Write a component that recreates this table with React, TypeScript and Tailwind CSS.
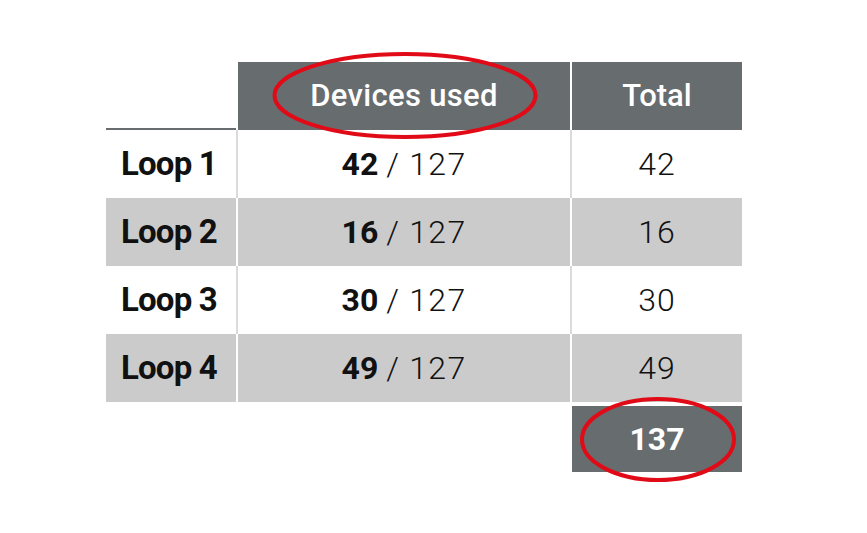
const rows = [
  { label: "Loop 1", used: 42, total: 42, shaded: false },
  { label: "Loop 2", used: 16, total: 16, shaded: true },
  { label: "Loop 3", used: 30, total: 30, shaded: false },
  { label: "Loop 4", used: 49, total: 49, shaded: true },
];

export default function App() {
  return (
    <div className="w-[867px] h-[533px] bg-white pl-[106px] pt-[62px] font-['Roboto',sans-serif] text-[#111]">
      <div className="relative w-[636px]">
        {/* header */}
        <div className="flex h-[68px]">
          <div className="w-[130px] border-b-2 border-[#676c6f]" />
          <div className="w-[2px]" />
          <div className="w-[332px] bg-[#676c6f] flex items-center justify-center text-white text-[31px] font-medium tracking-[0.01em]">
            Devices used
          </div>
          <div className="w-[2px] bg-white" />
          <div className="w-[170px] bg-[#676c6f] flex items-center justify-center text-white text-[31px] font-medium">
            Total
          </div>
        </div>

        {rows.map((r) => (
          <div key={r.label} className="flex h-[68px]">
            <div
              className={`w-[130px] flex items-center pl-[15px] text-[33px] font-bold tracking-[-0.025em] ${
                r.shaded ? "bg-[#cbcbcb]" : "bg-white"
              }`}
            >
              {r.label}
            </div>
            <div className={`w-[2px] ${r.shaded ? "bg-white" : "bg-[#d8dcde]"}`} />
            <div
              className={`w-[332px] flex items-center justify-center text-[32px] ${
                r.shaded ? "bg-[#cbcbcb]" : "bg-white"
              }`}
            >
              <span className="font-bold">{r.used}</span>
              <span className="font-light ml-[8px] tracking-[0.04em]">/ 127</span>
            </div>
            <div className={`w-[2px] ${r.shaded ? "bg-white" : "bg-[#d8dcde]"}`} />
            <div
              className={`w-[170px] flex items-center justify-center text-[32px] font-light tracking-[0.03em] ${
                r.shaded ? "bg-[#cbcbcb]" : "bg-white"
              }`}
            >
              {r.total}
            </div>
          </div>
        ))}

        {/* grand total */}
        <div className="flex mt-[4px]">
          <div className="ml-[466px] w-[170px] h-[66px] bg-[#676c6f] flex items-center justify-center text-white text-[32px] font-bold">
            137
          </div>
        </div>

        {/* red highlight rings */}
        <svg
          className="absolute left-0 top-0 pointer-events-none overflow-visible"
          width="636"
          height="420"
        >
          <ellipse cx="299" cy="33.5" rx="130.5" ry="41.5" fill="none" stroke="#e10a17" strokeWidth="4" />
          <ellipse cx="552" cy="377.5" rx="76" ry="40.5" fill="none" stroke="#e10a17" strokeWidth="4" />
        </svg>
      </div>
    </div>
  );
}
